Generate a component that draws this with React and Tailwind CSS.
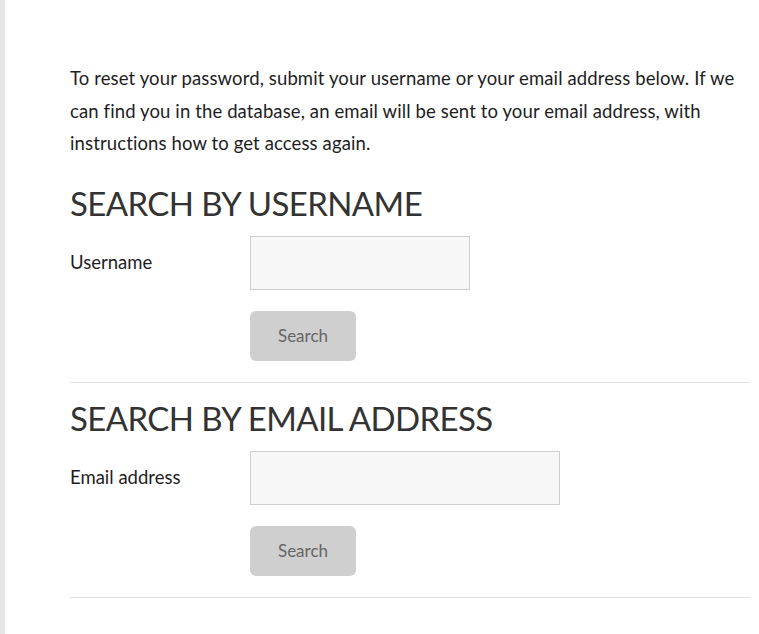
import React from 'react';

const fontStack = { fontFamily: 'Lato, "Open Sans", sans-serif' };

const SearchBlock = ({ title, label, inputWidth, first }) => (
  <div className={first ? 'mt-[21px]' : 'mt-[13px]'}>
    <h2 className="text-[33px] leading-[44px] text-[#333] font-normal tracking-[-0.6px]">{title}</h2>
    <div className="mt-[11px] flex items-center">
      <label className="w-[180px] text-[18.5px] text-[#1e1e1e]">{label}</label>
      <input type="text" className={`${inputWidth} h-[54px] bg-[#f7f7f7] border border-[#cfcfcf] outline-none px-3`} />
    </div>
    <div className="pl-[180px] mt-[21px]">
      <button className="w-[106px] h-[50px] rounded-md bg-[#cfcfcf] text-[#666] text-[17px]">Search</button>
    </div>
    <hr className="mt-[21px] border-0 border-t border-[#e2e2e2] w-[680px]" />
  </div>
);

const App = () => {
  return (
    <div className="min-h-screen bg-white border-l-[5px] border-[#e6e6e6]" style={fontStack}>
      <div className="pl-[65px] pt-[62px] pr-[9px]">
        <p className="text-[18.5px] leading-[32.5px] tracking-[0.12px] text-[#1e1e1e] w-[680px]">
          To reset your password, submit your username or your email address below. If we can find you in the database, an email will be sent to your email address, with instructions how to get access again.
        </p>
        <SearchBlock first title="SEARCH BY USERNAME" label="Username" inputWidth="w-[220px]" />
        <SearchBlock title="SEARCH BY EMAIL ADDRESS" label="Email address" inputWidth="w-[310px]" />
      </div>
    </div>
  );
};

export default App;
